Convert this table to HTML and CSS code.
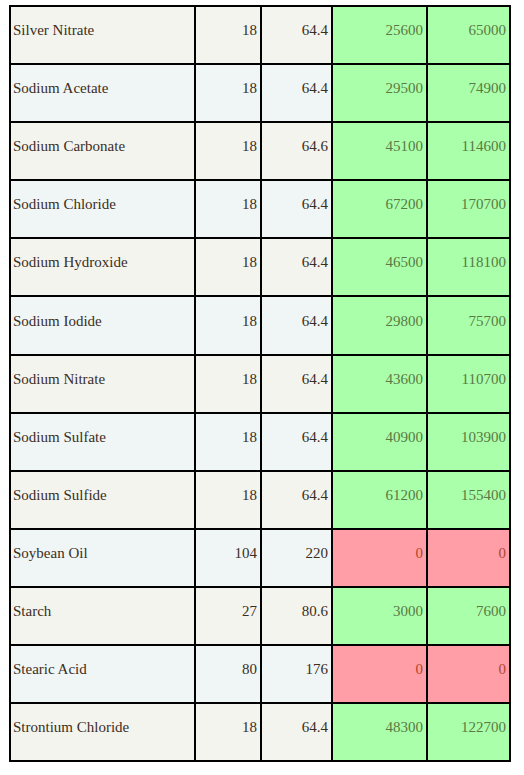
FILE: index.html
```html
<!DOCTYPE html>
<html>
<head>
<meta charset="utf-8">
<link rel="stylesheet" href="styles.css">
</head>
<body>
<table class="data">
<tbody>
<tr class="odd"><td class="name">Silver Nitrate</td><td class="num">18</td><td class="num">64.4</td><td class="num ok">25600</td><td class="num ok">65000</td></tr>
<tr class="even"><td class="name">Sodium Acetate</td><td class="num">18</td><td class="num">64.4</td><td class="num ok">29500</td><td class="num ok">74900</td></tr>
<tr class="odd"><td class="name">Sodium Carbonate</td><td class="num">18</td><td class="num">64.6</td><td class="num ok">45100</td><td class="num ok">114600</td></tr>
<tr class="even"><td class="name">Sodium Chloride</td><td class="num">18</td><td class="num">64.4</td><td class="num ok">67200</td><td class="num ok">170700</td></tr>
<tr class="odd"><td class="name">Sodium Hydroxide</td><td class="num">18</td><td class="num">64.4</td><td class="num ok">46500</td><td class="num ok">118100</td></tr>
<tr class="even"><td class="name">Sodium Iodide</td><td class="num">18</td><td class="num">64.4</td><td class="num ok">29800</td><td class="num ok">75700</td></tr>
<tr class="odd"><td class="name">Sodium Nitrate</td><td class="num">18</td><td class="num">64.4</td><td class="num ok">43600</td><td class="num ok">110700</td></tr>
<tr class="even"><td class="name">Sodium Sulfate</td><td class="num">18</td><td class="num">64.4</td><td class="num ok">40900</td><td class="num ok">103900</td></tr>
<tr class="odd"><td class="name">Sodium Sulfide</td><td class="num">18</td><td class="num">64.4</td><td class="num ok">61200</td><td class="num ok">155400</td></tr>
<tr class="even"><td class="name">Soybean Oil</td><td class="num">104</td><td class="num">220</td><td class="num bad">0</td><td class="num bad">0</td></tr>
<tr class="odd"><td class="name">Starch</td><td class="num">27</td><td class="num">80.6</td><td class="num ok">3000</td><td class="num ok">7600</td></tr>
<tr class="even"><td class="name">Stearic Acid</td><td class="num">80</td><td class="num">176</td><td class="num bad">0</td><td class="num bad">0</td></tr>
<tr class="odd"><td class="name">Strontium Chloride</td><td class="num">18</td><td class="num">64.4</td><td class="num ok">48300</td><td class="num ok">122700</td></tr>
</tbody>
</table>
</body>
</html>
```
FILE: styles.css
```css
body {
  margin: 0;
  padding: 5px 0 0 9px;
  background: #ffffff;
  font-family: "Liberation Serif", serif;
  font-size: 15px;
  color: #3a2e1e;
}
.data {
  border-collapse: collapse;
  width: 502px;
  table-layout: fixed;
  border: 2px solid #000;
}
.data td {
  border: 2px solid #000;
  padding: 0 3px 9px 2px;
  height: 47.1px;
  vertical-align: middle;
}
.data td:nth-child(1) { width: 178px; }
.data td:nth-child(2) { width: 59px; }
.data td:nth-child(3) { width: 64px; }
.data td:nth-child(4) { width: 88px; }
.odd td { background: #f4f4ef; }
.even td { background: #f0f5f5; }
.num { text-align: right; }
.data td.ok { background: #aaffaa; color: #5a7a44; }
.data td.bad { background: #ff9ea6; color: #b0462e; }
```
